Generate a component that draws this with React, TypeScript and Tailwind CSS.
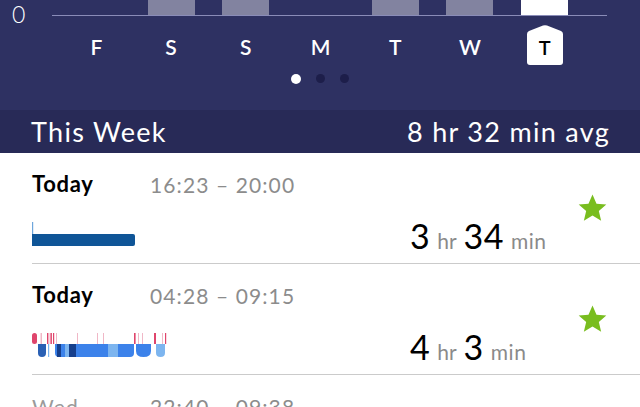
import React from "react";

const DAYS = ["F", "S", "S", "M", "T", "W", "T"];
// only the bottom stubs of the bars show above the baseline
const BARS = [0, 1, 1, 0, 1, 1, 2];

function Star() {
  return (
    <svg width="31" height="31" viewBox="0 0 24 24">
      <path
        d="M12 1.2l3.1 7.1 7.6.6-5.8 5 1.8 7.5L12 17.4l-6.7 4 1.8-7.5-5.8-5 7.6-.6z"
        fill="#79bd1f"
      />
    </svg>
  );
}

function SelectedDay({ label }: { label: string }) {
  return (
    <div className="relative flex h-[40px] w-[36px] items-end justify-center">
      <svg className="absolute inset-0" width="36" height="40" viewBox="0 0 36 40">
        <path
          d="M0 9 Q0 7 2 6 L16 0.6 Q18 0 20 0.6 L34 6 Q36 7 36 9 L36 37 Q36 40 33 40 L3 40 Q0 40 0 37 Z"
          fill="#ffffff"
        />
      </svg>
      <span className="relative pb-[8px] text-[20px] font-semibold leading-none text-black">{label}</span>
    </div>
  );
}

function SingleBar() {
  return (
    <svg width="104" height="25" viewBox="0 0 104 25">
      <rect x="0" y="0" width="1.2" height="24" fill="#6ea6dc" />
      <path d="M0 12 H101 Q103 12 103 14 V22 Q103 24 101 24 H0 Z" fill="#0f5597" />
    </svg>
  );
}

function StagesBar() {
  const pink = "#df456c";
  const pale = "#f0b7c6";
  const awake: [number, number, string][] = [
    [8.5, 1.5, pale],
    [15, 1.4, pink],
    [17.5, 1, pale],
    [18.5, 1.4, pink],
    [21, 1.2, pink],
    [24, 1, pale],
    [45, 1, pale],
    [65, 1, pale],
    [71, 1, pale],
    [102, 1.6, pink],
    [106, 1, pale],
    [110, 1, pale],
    [122, 2, pink],
    [130, 1, pale],
    [133, 1.2, pink],
  ];
  const mid = "#3c82ea";
  const light = "#7db5ef";
  const dark = "#163f8c";
  const deep = "#2a60b4";
  return (
    <svg width="136" height="26" viewBox="0 0 136 26">
      <rect x="0" y="1" width="5" height="11" rx="2.5" fill={pink} />
      {awake.map(([x, w, c], i) => (
        <rect key={i} x={x} y="1" width={w} height="11" fill={c} />
      ))}
      {/* lower stage band */}
      <path d="M6 12 H14 V21 Q14 25 10 25 Q6 25 6 21 Z" fill={deep} />
      <rect x="16" y="12" width="1.2" height="13" fill={light} />
      <path d="M23 12 H30 V25 H27 Q23 25 23 21 Z" fill={mid} />
      <rect x="25" y="12" width="5" height="13" fill={dark} />
      <rect x="29" y="12" width="4" height="13" fill={mid} />
      <rect x="33" y="12" width="4" height="13" fill={light} />
      <rect x="37" y="12" width="7" height="13" fill={dark} />
      <rect x="44" y="12" width="32" height="13" fill={mid} />
      <rect x="76" y="12" width="10" height="13" fill={light} />
      <path d="M86 12 H102 V21 Q102 25 98 25 H86 Z" fill={mid} />
      <path d="M104 12 H119 V19 Q119 25 111.5 25 Q104 25 104 19 Z" fill={mid} />
      <path d="M124 12 H133 V21 Q133 25 128.5 25 Q124 25 124 21 Z" fill={light} />
    </svg>
  );
}

function Duration({ h, m }: { h: string; m: string }) {
  return (
    <div className="flex items-baseline leading-none text-black">
      <span className="text-[34px] tracking-[0.5px]">{h}</span>
      <span className="ml-[7px] text-[21px] text-[#8a8a8a]">hr</span>
      <span className="ml-[7px] text-[34px] tracking-[0.5px]">{m}</span>
      <span className="ml-[7px] text-[21px] tracking-[0.5px] text-[#8a8a8a]">min</span>
    </div>
  );
}

function SleepRow({
  day,
  time,
  bar,
  h,
  m,
  dim,
}: {
  day: string;
  time: string;
  bar: React.ReactNode;
  h: string;
  m: string;
  dim?: boolean;
}) {
  return (
    <div className="ml-8 flex h-[111px] border-b border-[#cbcbcb] pr-8">
      <div className="flex flex-1 flex-col">
        <div className="mt-[19px] flex h-[24px] items-center leading-none">
          <span
            className={`w-[118px] ${
              dim ? "text-[21px] tracking-[1.2px] text-[#9a9a9a]" : "text-[22px] font-bold tracking-[0.7px] text-black"
            }`}
          >
            {day}
          </span>
          <span className="text-[21px] tracking-[1.1px] text-[#8c8c8c]">{time}</span>
        </div>
        <div className="mb-[16px] mt-auto flex items-end">
          <div className="w-[378px]">{bar}</div>
          <div className="mb-[-6px]">
            <Duration h={h} m={m} />
          </div>
        </div>
      </div>
      <div className="ml-auto mt-[40px]">
        <Star />
      </div>
    </div>
  );
}

export default function App() {
  return (
    <div
      className="h-[407px] w-[640px] overflow-hidden bg-white"
      style={{ fontFamily: "Lato, 'Noto Sans', sans-serif" }}
    >
      {/* week chart */}
      <div className="h-[110px] bg-[#2e3162] text-white">
        <div className="flex items-start">
          <div className="h-[27px] w-[52px] pl-[12px] pt-[3px] text-[23px] font-light leading-none">0</div>
          <div className="h-[16px] w-[555px] border-b border-[#8a8cb8]">
            <div className="ml-[7px] grid h-full w-[523px] grid-cols-7">
              {BARS.map((b, i) => (
                <div key={i} className="flex justify-center">
                  {b === 1 && <div className="h-full w-[47px] bg-[#8283a0]" />}
                  {b === 2 && <div className="h-full w-[47px] bg-white" />}
                </div>
              ))}
            </div>
          </div>
        </div>
        <div className="ml-[59px] mt-[-2px] grid h-[40px] w-[523px] grid-cols-7">
          {DAYS.map((d, i) => (
            <div key={i} className="flex items-end justify-center">
              {i === DAYS.length - 1 ? (
                <SelectedDay label={d} />
              ) : (
                <span className="pb-[8px] text-[21px] font-semibold leading-none">{d}</span>
              )}
            </div>
          ))}
        </div>
        <div className="mt-[9px] flex justify-center gap-[15px]">
          <div className="h-[10px] w-[10px] rounded-full bg-white" />
          <div className="h-[9px] w-[9px] rounded-full bg-[#1d1e4a]" />
          <div className="h-[9px] w-[9px] rounded-full bg-[#1d1e4a]" />
        </div>
      </div>

      {/* summary band */}
      <div className="flex h-[43px] items-center justify-between bg-[#282a57] pl-[31px] pr-[30px] text-[27px] leading-none tracking-[1.3px] text-white">
        <span>This Week</span>
        <span>8 hr 32 min avg</span>
      </div>

      {/* sleep log */}
      <SleepRow day="Today" time="16:23 – 20:00" bar={<SingleBar />} h="3" m="34" />
      <SleepRow day="Today" time="04:28 – 09:15" bar={<StagesBar />} h="4" m="3" />
      <SleepRow day="Wed" time="22:40 – 09:38" bar={<div />} h="11" m="" dim />
    </div>
  );
}
